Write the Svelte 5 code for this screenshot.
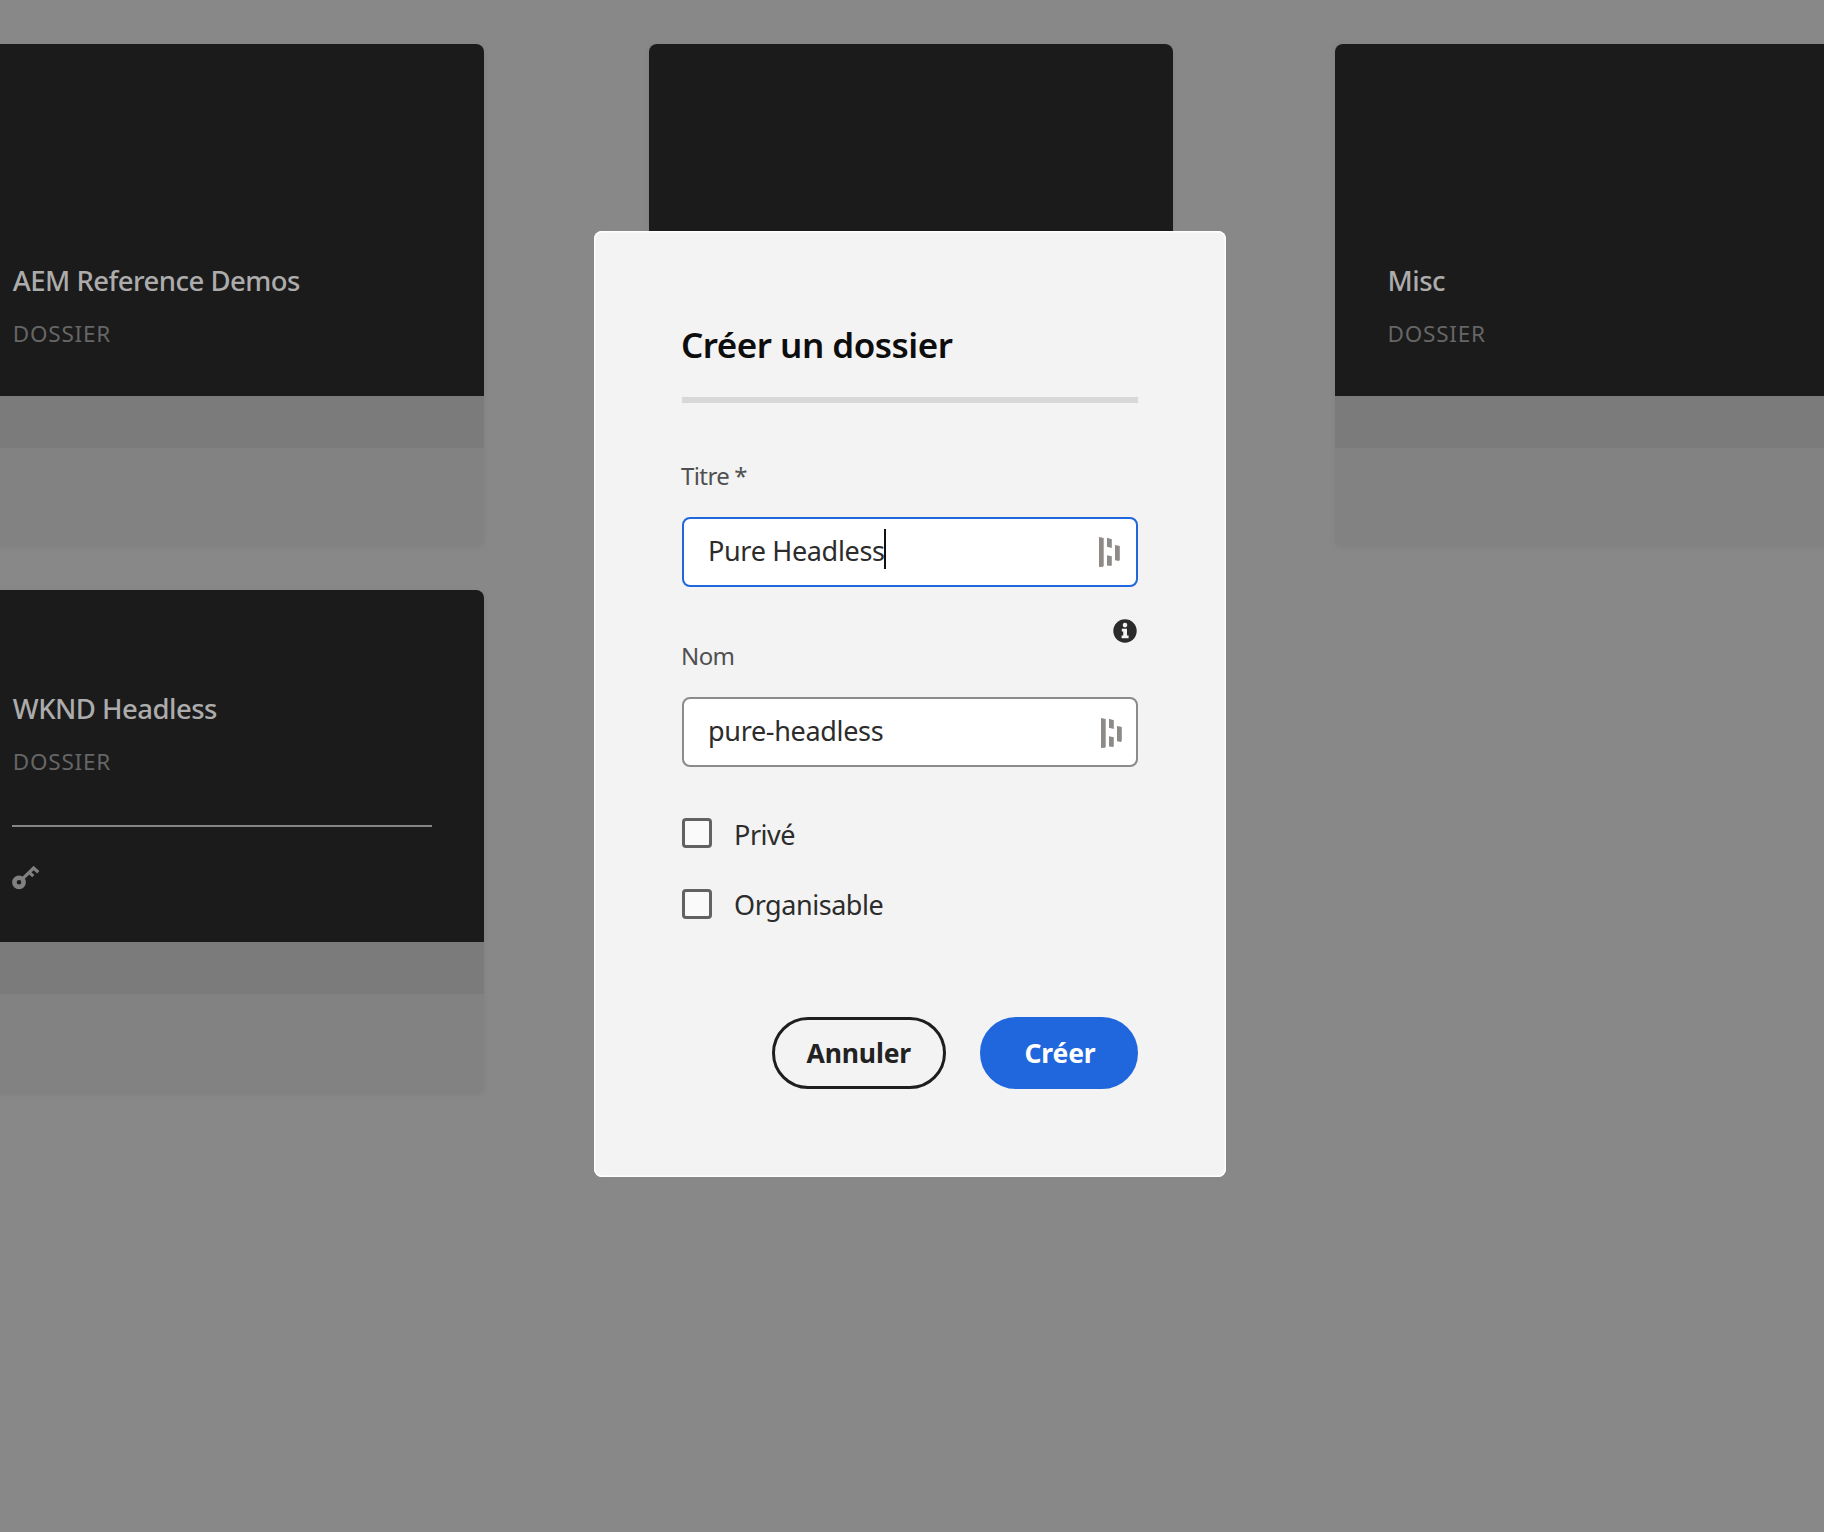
<script>
  const cards = [
    { title: 'AEM Reference Demos', type: 'DOSSIER', locked: false },
    { title: '', type: '', locked: false },
    { title: 'Misc', type: 'DOSSIER', locked: false },
    { title: 'WKND Headless', type: 'DOSSIER', locked: true }
  ];
  const options = ['Privé', 'Organisable'];
</script>

{#snippet passwordIcon()}
  <svg class="manager" width="21" height="30" viewBox="0 0 21 30" fill="#8d8a87">
    <path d="M0 0L4.7 1V28.8L4 29.7L0 30Z" />
    <path d="M8 0.8L12.8 2.2V11L8 9.8Z" />
    <path d="M8 18.2L12.8 19.2V28L12 29L8 28.5Z" />
    <path d="M16 8L20.8 9V22.7L20 24L16 23.3Z" />
  </svg>
{/snippet}

<div class="page">
  <main class="cards">
    {#each cards as card}
      <article class="card" class:locked={card.locked}>
        <div class="cover">
          {#if card.title}
            <h2>{card.title}</h2>
            <p>{card.type}</p>
          {/if}
          {#if card.locked}
            <div class="line"></div>
            <svg class="key" width="28" height="24" viewBox="0 0 28 24" fill="none" stroke="#808080">
              <circle cx="7" cy="16.3" r="4.6" stroke-width="4.6" />
              <path d="M10.5 12.8L21.6 2L26.3 6.2M17.2 6.3L21.3 10.2" stroke-width="3.2" />
            </svg>
          {/if}
        </div>
        <div class="band"></div>
      </article>
    {/each}
  </main>

  <section class="dialog" role="dialog" aria-label="Créer un dossier">
    <h1>Créer un dossier</h1>
    <hr />
    <div class="label titre">Titre<span>*</span></div>
    <div class="field focused">
      <span class="value">Pure Headless</span><i class="caret"></i>
      {@render passwordIcon()}
    </div>
    <div class="info">
      <svg width="24" height="24" viewBox="0 0 24 24">
        <circle cx="12" cy="12" r="11.7" fill="#2b2b2b" />
        <circle cx="12" cy="6.1" r="2.3" fill="#f3f3f3" />
        <path d="M8.8 9.8H14V16.5H15.6V19.3H8.6V16.5H10.2V12.4H8.8Z" fill="#f3f3f3" />
      </svg>
    </div>
    <div class="label">Nom</div>
    <div class="field second">
      <span class="value">pure-headless</span>
      {@render passwordIcon()}
    </div>
    <div class="options">
      {#each options as option}
        <label class="option"><span class="box"></span><span class="text">{option}</span></label>
      {/each}
    </div>
    <div class="actions">
      <button class="cancel">Annuler</button>
      <button class="create">Créer</button>
    </div>
  </section>
</div>

<style>
  :global(body) {
    margin: 0;
    background: #888;
  }
  * {
    box-sizing: border-box;
  }
  .page {
    position: relative;
    width: 1824px;
    height: 1532px;
    overflow: hidden;
    background: #888;
    font-family: 'Noto Sans', 'Open Sans', sans-serif;
    white-space: nowrap;
  }
  .cards {
    display: grid;
    grid-template-columns: repeat(3, 524px);
    column-gap: 163.4px;
    row-gap: 44px;
    margin-left: -39.7px;
    padding-top: 44px;
  }
  .card {
    height: 501.5px;
    border-radius: 8px;
    background: #828282;
    box-shadow: 0 1px 4px rgba(125, 125, 125, 0.7);
    overflow: hidden;
  }
  .card:nth-child(2) {
    margin: 0 -1px 0 1px;
  }
  .card.locked {
    height: 504px;
  }
  .cover {
    display: flex;
    flex-direction: column;
    justify-content: flex-end;
    height: 352px;
    padding: 0 52.5px 45px;
    background: #1b1b1b;
    color: #acacac;
  }
  .band {
    height: 52px;
    background: #7b7b7b;
  }
  h2 {
    margin: 0 0 18px;
    font-size: 27.5px;
    line-height: 36px;
    font-weight: 500;
    letter-spacing: -0.53px;
  }
  p {
    margin: 0;
    font-size: 22.5px;
    line-height: 34px;
    letter-spacing: 0.75px;
    color: #666;
  }
  .locked .cover {
    padding-bottom: 51.5px;
  }
  .line {
    height: 2px;
    margin: 46.5px 0 0 -1px;
    background: #858585;
  }
  .key {
    margin: 39px 0 0 -1px;
  }
  .dialog {
    position: absolute;
    left: 594px;
    top: 230.5px;
    display: flex;
    flex-direction: column;
    width: 632px;
    height: 946.5px;
    padding: 94.5px 88px 0;
    border-radius: 8px;
    background: #f3f3f3;
    box-shadow: inset 0 0 0 1.5px #fff;
  }
  h1 {
    margin: 0 0 0 -1px;
    font-size: 35px;
    line-height: 40px;
    font-weight: 600;
    color: #0d0d0d;
    letter-spacing: -0.5px;
  }
  hr {
    width: 100%;
    height: 5.5px;
    margin: 32px 0 0;
    border: 0;
    background: #d8d8d8;
  }
  .label {
    margin-left: -1px;
    font-size: 24px;
    line-height: 30px;
    color: #505050;
    letter-spacing: -0.6px;
  }
  .titre {
    margin-top: 58px;
  }
  .titre span {
    margin-left: 5px;
  }
  .field {
    display: flex;
    align-items: center;
    height: 70px;
    margin-top: 26px;
    padding: 0 16px 0 24px;
    border: 2px solid #8b8b8b;
    border-radius: 8px;
    background: #fff;
    font-size: 27px;
    color: #2c2c2c;
    letter-spacing: -0.33px;
  }
  .value {
    padding-bottom: 2px;
  }
  .focused {
    border-color: #2066dd;
  }
  .second {
    padding-right: 14px;
  }
  .caret {
    width: 2px;
    height: 40px;
    margin: -6px 0 0 -0.5px;
    background: #111;
  }
  .manager {
    margin-left: auto;
  }
  .second .manager {
    margin-top: 3px;
  }
  .info {
    display: flex;
    justify-content: flex-end;
    height: 22px;
    margin: 32px 1px 0 0;
  }
  .info svg {
    flex: none;
  }
  .options {
    display: flex;
    flex-direction: column;
    gap: 41px;
    margin-top: 51px;
  }
  .option {
    display: flex;
    align-items: center;
    height: 30px;
    gap: 22px;
    font-size: 27px;
    line-height: 30px;
    color: #2c2c2c;
    letter-spacing: -0.45px;
  }
  .box {
    width: 30px;
    height: 30px;
    border: 3px solid #626262;
    border-radius: 4px;
    background: #fafafa;
  }
  .text {
    padding-top: 2px;
  }
  .option:first-child .text {
    padding-top: 4px;
  }
  .actions {
    display: flex;
    justify-content: flex-end;
    gap: 34.5px;
    margin-top: 98px;
  }
  button {
    height: 72px;
    padding: 2px 0 0;
    border: 3px solid #1e1e1e;
    border-radius: 36px;
    background: transparent;
    font: 700 26.5px/1 'Noto Sans', 'Open Sans', sans-serif;
    letter-spacing: -0.15px;
    color: #222;
  }
  .cancel {
    width: 173.5px;
  }
  .create {
    width: 158px;
    padding-left: 2px;
    border-color: #2066dd;
    background: #2066dd;
    color: #fff;
  }
</style>
